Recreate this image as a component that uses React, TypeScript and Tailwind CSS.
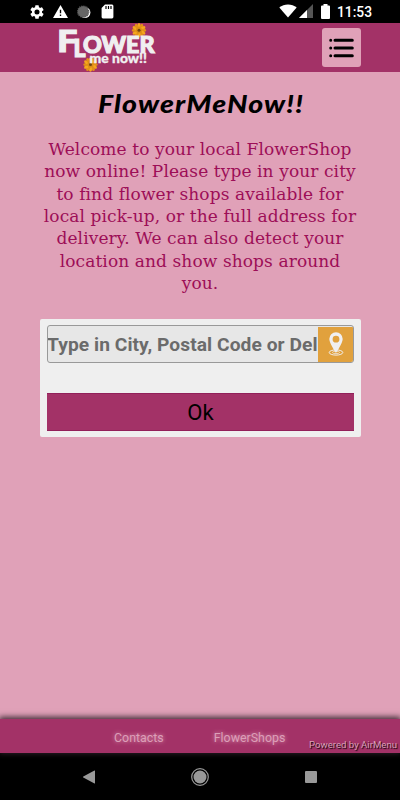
import React from 'react'

const welcomeLines = [
  'Welcome to your local FlowerShop',
  'now online! Please type in your city',
  'to find flower shops available for',
  'local pick-up, or the full address for',
  'delivery. We can also detect your',
  'location and show shops around',
  'you.',
]

const petals = [0, 30, 60, 90, 120, 150, 180, 210, 240, 270, 300, 330]

function Flower({ x, y }: { x: number; y: number }) {
  return (
    <g transform={`translate(${x} ${y})`}>
      {petals.map((angle) => (
        <ellipse
          key={angle}
          cx="0"
          cy="-4.5"
          rx="1.6"
          ry="2.8"
          fill={angle % 60 === 0 ? '#f5a81c' : '#e39117'}
          transform={`rotate(${angle})`}
        />
      ))}
      <circle r="3" fill="#dc8c16" />
      <circle r="1.5" fill="#70440f" />
    </g>
  )
}

function Logo() {
  return (
    <svg
      className="block overflow-visible font-['Lato',sans-serif] font-black"
      width="104"
      height="49"
      viewBox="0 0 104 49"
      fill="#f0eff0"
    >
      <Flower x={83} y={7.3} />
      <Flower x={34.5} y={41.5} />
      <g stroke="#f0eff0" strokeWidth="1.2">
        <text x="1.2" y="28.5" fontSize="30.5" textLength="20" lengthAdjust="spacingAndGlyphs">F</text>
        <text x="17.5" y="33.5" fontSize="24" textLength="12" lengthAdjust="spacingAndGlyphs">L</text>
        <text x="27" y="29.7" fontSize="23.5" textLength="71.5" lengthAdjust="spacingAndGlyphs">OWER</text>
      </g>
      <text x="33.5" y="40" fontSize="13.5" textLength="57.5" lengthAdjust="spacingAndGlyphs" stroke="#f0eff0" strokeWidth="0.3">me now!!</text>
    </svg>
  )
}

function StatusBar() {
  return (
    <div className="flex h-[23px] items-center justify-between bg-black pl-[30px] pr-7">
      <div className="flex items-center gap-[9px]">
        <svg width="14" height="14" viewBox="2 2 20 20" fill="#fff">
          <path d="M19.14 12.94c.04-.3.06-.61.06-.94s-.02-.64-.07-.94l2.03-1.58a.5.5 0 0 0 .12-.61l-1.92-3.32a.5.5 0 0 0-.59-.22l-2.39.96c-.5-.38-1.03-.7-1.62-.94L14.4 2.81A.5.5 0 0 0 13.92 2.4h-3.84a.5.5 0 0 0-.47.41l-.36 2.54c-.59.24-1.13.57-1.62.94l-2.39-.96a.5.5 0 0 0-.59.22L2.74 8.87a.5.5 0 0 0 .12.61l2.03 1.58c-.05.3-.09.63-.09.94s.02.64.07.94l-2.03 1.58a.5.5 0 0 0-.12.61l1.92 3.32c.12.22.37.29.59.22l2.39-.96c.5.38 1.03.7 1.62.94l.36 2.54c.05.24.24.41.48.41h3.84c.24 0 .44-.17.47-.41l.36-2.54c.59-.24 1.13-.56 1.62-.94l2.39.96c.22.08.47 0 .59-.22l1.92-3.32a.5.5 0 0 0-.12-.61zM12 15.6a3.6 3.6 0 1 1 0-7.2 3.6 3.6 0 0 1 0 7.2z" />
        </svg>
        <svg width="15" height="13" viewBox="1 2 22 19" fill="#fff">
          <path d="M1 21h22L12 2zm12-3h-2v-2h2zm0-4h-2v-5h2z" />
        </svg>
        <svg width="14" height="14" viewBox="0 0 14 14">
          <circle cx="7.8" cy="7.5" r="5.6" fill="#fff" />
          <circle cx="6.2" cy="6.7" r="5.6" fill="#666" stroke="#555" strokeWidth="1.4" strokeDasharray="1 .8" />
        </svg>
        <svg className="ml-px" width="13" height="15" viewBox="0 0 13 15">
          <path d="M4 .5h7A1.4 1.4 0 0 1 12.4 2v11a1.4 1.4 0 0 1-1.4 1.4H2A1.4 1.4 0 0 1 .6 13V4z" fill="#fff" />
          <path d="M5 2v3M7.5 2v3M10 2v3" stroke="#000" strokeWidth="1.2" />
        </svg>
      </div>
      <div className="flex items-center">
        <svg width="18" height="14" viewBox="0 0 18 14">
          <path d="M.3 3.6a13.4 13.4 0 0 1 17.4 0L9 13.5z" fill="#fff" />
        </svg>
        <svg className="ml-0.5" width="14" height="14" viewBox="0 0 14 14">
          <path d="M0 14 14 0v14z" fill="#555" />
          <path d="M0 14 8 6v8z" fill="#fff" />
        </svg>
        <svg className="ml-2" width="9" height="15" viewBox="0 0 9 15" fill="#fff">
          <path d="M2.5 0h4v1.5H8a1 1 0 0 1 1 1V14a1 1 0 0 1-1 1H1a1 1 0 0 1-1-1V2.5a1 1 0 0 1 1-1h1.5z" />
        </svg>
        <span className="ml-[7px] pt-0.5 text-[13.8px] font-medium leading-none text-white">11:53</span>
      </div>
    </div>
  )
}

export default function App() {
  return (
    <div className="flex h-[800px] w-[400px] flex-col overflow-hidden bg-[#e0a1b8] font-['Roboto',sans-serif]">
      <StatusBar />

      {/* Header */}
      <header className="flex h-[49px] shrink-0 items-center justify-between bg-[#a33267] pl-14 pr-[39px]">
        <Logo />
        <button className="flex h-[39px] w-[39px] items-center justify-center rounded-[3px] bg-[#e0a1b8]">
          <svg width="25" height="20" viewBox="0 0 25 20" stroke="#000" strokeWidth="3" strokeLinecap="round">
            <path d="M1.7 2.2h.01M6 2.2h17.3M1.7 10h.01M6 10h17.3M1.7 17.8h.01M6 17.8h17.3" />
          </svg>
        </button>
      </header>

      {/* Welcome text */}
      <main className="flex-1 px-10">
        <h1 className="mt-[17px] leading-[30px]">
          <svg
            className="mx-auto block overflow-visible font-['Lato',sans-serif] font-black italic"
            width="210"
            height="30"
            viewBox="0 0 210 30"
          >
            <text x="3" y="24" fontSize="25" textLength="206" lengthAdjust="spacingAndGlyphs" letterSpacing="1">FlowerMeNow!!</text>
          </svg>
        </h1>
        <p className="mt-[19px] text-center font-['DejaVu_Serif',serif] text-[17px] leading-[22.35px] tracking-[0.1px] text-[#9d0e57]">
          {welcomeLines.map((line) => (
            <span key={line} className="-mx-2 block whitespace-nowrap">
              {line}
            </span>
          ))}
        </p>

        {/* Search form */}
        <form className="mt-[25px] h-[118px] w-[321px] rounded-[2px] bg-[#efefef] px-[7px] pt-1.5">
          <div className="flex h-[38px] w-[307px] items-center overflow-hidden rounded-[3px] border border-[#999] bg-[#e7e7e7]">
            <div className="w-[270px] shrink-0 overflow-hidden whitespace-nowrap pt-0.5 text-[19.2px] font-bold tracking-[0.06px] text-[#6b6b6b]">
              <span className="-ml-px">Type in City, Postal Code or Delivery Address</span>
            </div>
            <div className="flex h-[35px] w-[36px] shrink-0 items-center justify-center bg-[#e1a13d]">
              <svg width="16" height="24" viewBox="0 0 16 24">
                <ellipse cx="8" cy="20.5" rx="6.8" ry="2.6" fill="none" stroke="#f0eff0" strokeWidth="1" />
                <ellipse cx="8" cy="20.4" rx="3.6" ry="1.2" fill="none" stroke="#f0eff0" strokeWidth=".7" />
                <path
                  d="M8 .3a6.7 6.7 0 0 0-6.7 6.8C1.3 11.5 8 21 8 21s6.7-9.5 6.7-13.9A6.7 6.7 0 0 0 8 .3zm0 3.5a3.4 3.4 0 1 1 0 6.8 3.4 3.4 0 0 1 0-6.8z"
                  fill="#f0eff0"
                />
              </svg>
            </div>
          </div>
          <button
            type="button"
            className="mt-[30px] block h-[38px] w-[307px] border-y border-[#92205a] bg-[#a33267] text-center text-[22px] leading-[37px] text-black"
          >
            Ok
          </button>
        </form>
      </main>

      {/* Footer */}
      <footer className="relative h-[34px] shrink-0 bg-[#a33267] text-[#dc9fb8] shadow-[0_-1px_6px_1px_#3d2832]">
        <nav className="flex gap-[50px] pl-[114px] pt-[11px] text-[12.4px] leading-4 [text-shadow:0_0_4px_#e0a1b8]">
          <a>Contacts</a>
          <a>FlowerShops</a>
        </nav>
        <span className="absolute bottom-[2px] right-[3px] text-[9.6px] leading-3 [text-shadow:1px_1px_1px_#000]">
          Powered by AirMenu
        </span>
      </footer>

      {/* Android navigation */}
      <div className="flex h-[47px] shrink-0 items-center justify-between bg-black px-[83px]">
        <svg width="12" height="14" viewBox="0 0 12 14" fill="#999">
          <path d="M11 .7a.6.6 0 0 1 1 .5v11.6a.6.6 0 0 1-1 .5L.3 7.5a.6.6 0 0 1 0-1z" />
        </svg>
        <svg width="18" height="18" viewBox="0 0 18 18">
          <circle cx="9" cy="9" r="8.3" fill="none" stroke="#999" strokeWidth="1.2" />
          <circle cx="9" cy="9" r="6.5" fill="#999" />
        </svg>
        <svg width="12" height="12" viewBox="0 0 12 12" fill="#999">
          <rect width="12" height="12" rx="1" />
        </svg>
      </div>
    </div>
  )
}
